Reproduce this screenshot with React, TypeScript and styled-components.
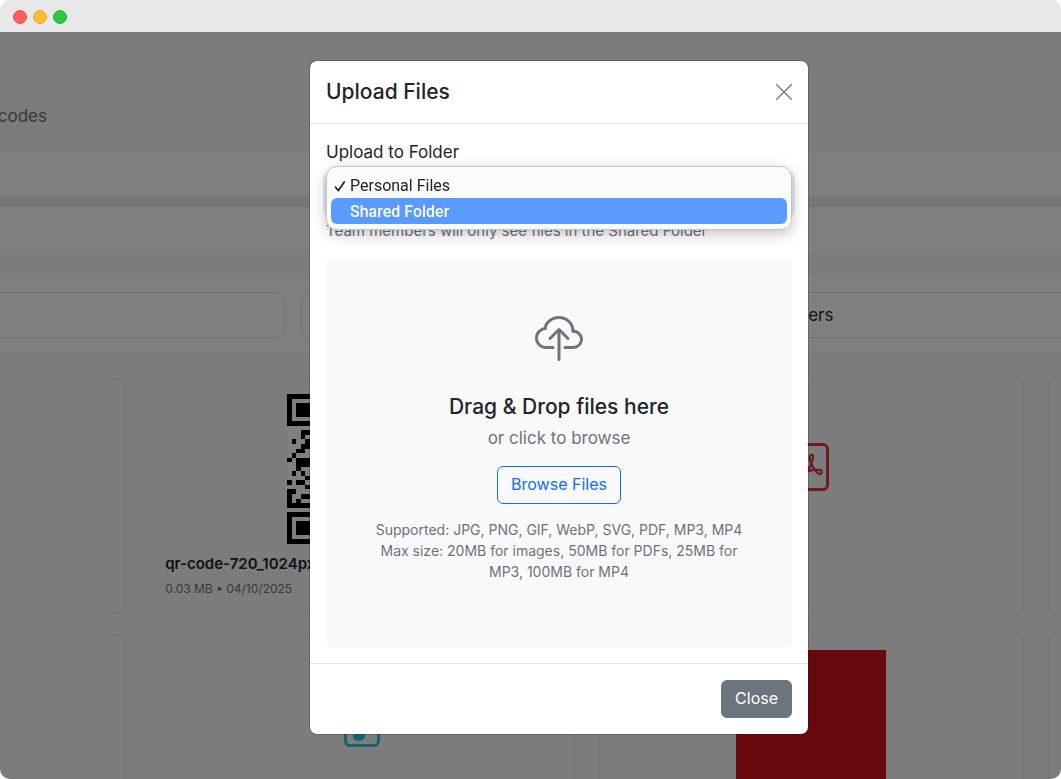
import React from "react";
import styled, { createGlobalStyle } from "styled-components";
import { BsCloudUpload, BsFileEarmarkMusic, BsFilePdf } from "react-icons/bs";

const GlobalStyle = createGlobalStyle`
  *, *::before, *::after { box-sizing: border-box; }
  body {
    margin: 0;
    background: #fff;
    color: #212529;
    font: 400 17px/24px Inter, "Open Sans", sans-serif;
  }
  button, select { font: inherit; }
`;

const Window = styled.div`
  display: flex;
  flex-direction: column;
  height: 100vh;
  overflow: hidden;
  border-radius: 10px;
`;

const TitleBar = styled.header`
  display: flex;
  align-items: center;
  flex: none;
  gap: 6px;
  height: 32px;
  padding: 2px 13px 0;
  background: #e8e8e8;
`;

const Light = styled.span<{ $fill: string; $edge: string }>`
  width: 14px;
  height: 14px;
  border: 1px solid ${(p) => p.$edge};
  border-radius: 50%;
  background: ${(p) => p.$fill};
`;

const Viewport = styled.div`
  position: relative;
  flex: 1;
  min-height: 0;
  overflow: hidden;
  background: #f8f8f8;
`;

const Intro = styled.div`
  height: 120px;
  padding-top: 72px;
`;

const IntroText = styled.p`
  width: 347px;
  margin: 0 0 0 -300px;
  color: #6b7280;
  text-align: right;
  white-space: nowrap;
`;

const Band = styled.div<{ $height: number }>`
  height: ${(p) => p.$height}px;
  background: #fff;
`;

const Meter = styled.div`
  height: 10px;
  background: #e9ecef;
`;

const Toolbar = styled.div`
  margin-top: 24px;
  padding: 16px 0;
  border-bottom: 1px solid #f1f1f1;
  background: #fff;
`;

const ToolbarRow = styled.div`
  display: grid;
  grid-template-columns: 1fr 1fr;
  gap: 16px;
  margin: 0 -176px 0 -651px;
`;

const ToolbarButton = styled.button`
  height: 46px;
  padding: 0;
  border: 1px solid #e5e5e5;
  border-radius: 8px;
  background: transparent;
  color: #212529;
`;

const FileGrid = styled.div`
  display: grid;
  grid-template-columns: repeat(4, 1fr);
  gap: 20px 24px;
  margin: 23px -412px 0 -300px;
`;

const Card = styled.article`
  min-height: 236px;
  padding: 15px;
  border: 1px solid #e5e5e5;
  border-radius: 8px;
`;

const Thumb = styled.div<{ $color?: string }>`
  display: flex;
  align-items: center;
  justify-content: center;
  height: 150px;
  padding-bottom: 4px;
  color: ${(p) => p.$color ?? "inherit"};
`;

const Picture = styled.div<{ $fill: string }>`
  width: 150px;
  height: 150px;
  margin: 0 auto;
  background: ${(p) => p.$fill};
`;

const PictureFrame = styled.div`
  display: flex;
  justify-content: center;
`;

const FileName = styled.h6`
  margin: 9px 0 6px;
  font-size: 15px;
  font-weight: 600;
  line-height: 21px;
`;

const FileMeta = styled.p`
  margin: 0;
  color: #6c757d;
  font-size: 12px;
  line-height: 18px;
`;

const Backdrop = styled.div`
  position: absolute;
  inset: 0 -57px 0 0;
  padding: 28px 16px;
  background: rgba(0, 0, 0, 0.5);
`;

const Dialog = styled.section`
  max-width: 500px;
  margin: 0 auto;
  border: 1px solid rgba(0, 0, 0, 0.18);
  border-radius: 8px;
  background: #fff;
  background-clip: padding-box;
`;

const DialogHeader = styled.div`
  display: flex;
  align-items: center;
  justify-content: space-between;
  padding: 16px;
  border-bottom: 1px solid #dee2e6;
`;

const DialogTitle = styled.h5`
  margin: 0;
  font-size: 21px;
  font-weight: 500;
  line-height: 30px;
`;

const CloseIcon = styled.button`
  display: flex;
  padding: 0;
  border: 0;
  background: none;
  color: #7f7f7f;
`;

const DialogBody = styled.div`
  padding: 16px;
`;

const DialogFooter = styled.div`
  display: flex;
  justify-content: flex-end;
  padding: 16px;
  border-top: 1px solid #dee2e6;
`;

const Label = styled.label`
  display: block;
  margin-bottom: 8px;
  line-height: 24px;
`;

const SelectWrap = styled.div`
  position: relative;
`;

const Select = styled.select`
  display: block;
  width: 100%;
  height: 45px;
  padding: 6px 12px;
  border: 1px solid #86b7fe;
  border-radius: 8px;
  outline: none;
  background: #fff;
  box-shadow: 0 0 0 3px rgba(100, 120, 200, 0.16);
  color: #212529;
`;

const Menu = styled.ul`
  position: absolute;
  top: -6px;
  left: 0;
  right: 0;
  z-index: 1;
  margin: 0;
  padding: 5px 4px;
  border: 1px solid #c4c4c4;
  border-radius: 11px;
  background: rgba(252, 252, 252, 0.94);
  backdrop-filter: blur(3px);
  box-shadow: 0 4px 14px rgba(0, 0, 0, 0.24);
  font-family: Roboto, sans-serif;
  font-size: 16px;
  list-style: none;
`;

const MenuItem = styled.li<{ $active?: boolean }>`
  display: flex;
  align-items: center;
  height: 26px;
  padding-top: 1px;
  border-radius: 6px;
  background: ${(p) => (p.$active ? "#5a9bff" : "transparent")};
  color: ${(p) => (p.$active ? "#fff" : "#222")};
  font-weight: ${(p) => (p.$active ? 500 : 400)};
`;

const CheckSlot = styled.span`
  display: flex;
  flex: none;
  width: 19px;
  padding-left: 3px;
`;

const Help = styled.p`
  margin: 3px 0 17px;
  color: #6b7280;
  font-size: 15px;
  line-height: 21px;
`;

const DropZone = styled.div`
  display: flex;
  flex-direction: column;
  align-items: center;
  padding: 58px 32px 65px;
  border-radius: 6px;
  background: #f9f9f9;
  text-align: center;
`;

const CloudSlot = styled.div`
  display: flex;
  margin-bottom: 30px;
  color: #6c757d;
`;

const DropTitle = styled.h5`
  margin: 0 0 6px;
  font-size: 21px;
  font-weight: 500;
  line-height: 26px;
`;

const DropHint = styled.p`
  margin: 0 0 16px;
  color: #6b7280;
  line-height: 24px;
`;

const Button = styled.button<{ $outline?: boolean }>`
  height: 38px;
  padding: 0 13px 2px;
  border: 1px solid ${(p) => (p.$outline ? "#0d6efd" : "#6c757d")};
  border-radius: 6px;
  background: ${(p) => (p.$outline ? "transparent" : "#6c757d")};
  color: ${(p) => (p.$outline ? "#0d6efd" : "#fff")};
  font-size: 16px;
`;

const Limits = styled.p`
  margin: 15px 0 0;
  color: #6b7280;
  font-size: 14px;
  line-height: 21px;
`;

/* Left-hand data modules of the code, rows 8 to 24. */
const QR_ROWS = [
  "00011", "00010", "01001", "00011", "00110", "01000", "10111", "00111", "00100",
  "01010", "00001", "10110", "00001", "11000", "10011", "10100", "11111",
];

const Finder = ({ x, y }: { x: number; y: number }) => (
  <>
    <path fillRule="evenodd" d={`M${x} ${y}h7v7h-7zM${x + 1} ${y + 1}v5h5v-5z`} />
    <path d={`M${x + 2} ${y + 2}h3v3h-3z`} />
  </>
);

const QrCode = () => (
  <svg width="150" height="150" viewBox="0 0 33 33" shapeRendering="crispEdges" fill="#000" aria-hidden="true">
    <rect width="33" height="33" fill="#fff" />
    <Finder x={0} y={0} />
    <Finder x={26} y={0} />
    <Finder x={0} y={26} />
    {QR_ROWS.map((row, r) =>
      row.split("").map((bit, c) =>
        bit === "1" ? <rect key={`${r}-${c}`} x={c} y={r + 8} width="1" height="1" /> : null
      )
    )}
  </svg>
);

export default function App() {
  return (
    <>
      <GlobalStyle />
      <Window>
        <TitleBar>
          <Light $fill="#ff5f57" $edge="#ee5049" />
          <Light $fill="#febc2e" $edge="#e3a73a" />
          <Light $fill="#28c840" $edge="#24b13a" />
        </TitleBar>
        <Viewport>
          <Intro>
            <IntroText>Manage your files and QR codes</IntroText>
          </Intro>
          <Band $height={45} />
          <Meter />
          <Band $height={45} />
          <Toolbar>
            <ToolbarRow>
              <ToolbarButton type="button" aria-label="All files" />
              <ToolbarButton type="button">Manage Folders</ToolbarButton>
            </ToolbarRow>
          </Toolbar>
          <FileGrid>
            <Card />
            <Card>
              <PictureFrame>
                <QrCode />
              </PictureFrame>
              <FileName>qr-code-720_1024px</FileName>
              <FileMeta>0.03 MB • 04/10/2025</FileMeta>
            </Card>
            <Card>
              <Thumb $color="#dc3545">
                <BsFilePdf size={48} />
              </Thumb>
            </Card>
            <Card />
            <Card />
            <Card>
              <Thumb $color="#26c6e8">
                <BsFileEarmarkMusic size={48} />
              </Thumb>
            </Card>
            <Card>
              <Picture $fill="#cd101c" />
            </Card>
            <Card />
          </FileGrid>
          <Backdrop>
            <Dialog role="dialog" aria-labelledby="upload-title">
              <DialogHeader>
                <DialogTitle id="upload-title">Upload Files</DialogTitle>
                <CloseIcon type="button" aria-label="Close dialog">
                  <svg width="16" height="16" viewBox="0 0 16 16" stroke="currentColor" strokeWidth="1.5" strokeLinecap="round">
                    <path d="M.7.7l14.6 14.6M15.3.7L.7 15.3" />
                  </svg>
                </CloseIcon>
              </DialogHeader>
              <DialogBody>
                <Label htmlFor="folder">Upload to Folder</Label>
                <SelectWrap>
                  <Select id="folder" defaultValue="personal">
                    <option value="personal">Personal Files</option>
                    <option value="shared">Shared Folder</option>
                  </Select>
                  <Menu role="listbox" aria-label="Upload to Folder">
                    <MenuItem role="option" aria-selected="true">
                      <CheckSlot>
                        <svg width="12" height="12" viewBox="0 0 12 12" fill="none" stroke="currentColor" strokeWidth="1.7" strokeLinecap="round" strokeLinejoin="round">
                          <path d="M1.5 7.2L4.4 10.6L10.3 2" />
                        </svg>
                      </CheckSlot>
                      Personal Files
                    </MenuItem>
                    <MenuItem role="option" aria-selected="false" $active>
                      <CheckSlot />
                      Shared Folder
                    </MenuItem>
                  </Menu>
                </SelectWrap>
                <Help>Team members will only see files in the Shared Folder</Help>
                <DropZone>
                  <CloudSlot>
                    <BsCloudUpload size={48} />
                  </CloudSlot>
                  <DropTitle>Drag &amp; Drop files here</DropTitle>
                  <DropHint>or click to browse</DropHint>
                  <Button type="button" $outline>
                    Browse Files
                  </Button>
                  <Limits>
                    Supported: JPG, PNG, GIF, WebP, SVG, PDF, MP3, MP4
                    <br />
                    Max size: 20MB for images, 50MB for PDFs, 25MB for
                    <br />
                    MP3, 100MB for MP4
                  </Limits>
                </DropZone>
              </DialogBody>
              <DialogFooter>
                <Button type="button">Close</Button>
              </DialogFooter>
            </Dialog>
          </Backdrop>
        </Viewport>
      </Window>
    </>
  );
}
